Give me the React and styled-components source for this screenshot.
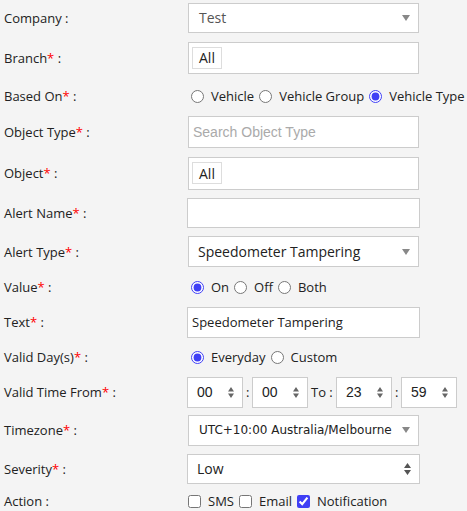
import { createGlobalStyle, styled } from "styled-components";

const Global = createGlobalStyle`
  html, body {
    margin: 0;
    padding: 0;
    background: #f4f4f4;
  }
  body {
    font-family: "Open Sans", "Liberation Sans", sans-serif;
    font-size: 13px;
    color: #222;
  }
`;

const Form = styled.div`
  width: 467px;
  display: flex;
  flex-direction: column;
`;

const Row = styled.div`
  height: ${(p) => p.$h}px;
  display: flex;
  align-items: center;
`;

const Label = styled.div`
  width: 187px;
  padding-left: 4px;
  box-sizing: border-box;
  flex-shrink: 0;
  white-space: nowrap;
`;

const Req = styled.span`
  color: #f00;
`;

const Field = styled.div`
  display: flex;
  align-items: center;
  flex-shrink: 0;
  white-space: nowrap;
  padding-left: ${(p) => p.$ml || 0}px;
`;

const Box = styled.div`
  box-sizing: border-box;
  flex-shrink: 0;
  width: ${(p) => p.$w}px;
  height: ${(p) => p.$h}px;
  background: #fff;
  border: 1px solid #ccc;
  display: flex;
  align-items: center;
  padding-left: ${(p) => p.$pl}px;
  padding-right: 8px;
  font-size: ${(p) => p.$fs || 14}px;
  color: ${(p) => p.$c || "#222"};
  font-family: ${(p) => p.$f || "inherit"};
  white-space: nowrap;
  overflow: hidden;
`;

const Grow = styled.span`
  flex: 1;
`;

const Tag = styled.span`
  box-sizing: border-box;
  height: 22px;
  padding: 0 6px;
  border: 1px solid #ddd;
  display: inline-flex;
  align-items: center;
  font-size: 14px;
`;

const Options = styled.div`
  display: flex;
  align-items: center;
`;

const Opt = styled.label`
  display: inline-flex;
  align-items: center;
  margin-right: 5px;
  white-space: nowrap;
  input {
    margin: 0 7px 0 0;
    width: 13px;
    height: 13px;
    accent-color: #3f3ff5;
  }
`;

const TimeSep = styled.span`
  box-sizing: border-box;
  width: ${(p) => p.$w}px;
  padding-left: ${(p) => p.$pl}px;
  font-size: 13px;
  white-space: nowrap;
`;

const Caret = () => (
  <svg width="8" height="6" viewBox="0 0 8 6">
    <path d="M0 0 L8 0 L4 6 Z" fill="#888" />
  </svg>
);

const Spin = () => (
  <svg width="7" height="12" viewBox="0 0 7 12">
    <path d="M0 5 L7 5 L3.5 0 Z M0 7 L7 7 L3.5 12 Z" fill="#555" />
  </svg>
);

const SpinSmall = () => (
  <svg width="6" height="11" viewBox="0 0 6 11">
    <path d="M0 4.5 L6 4.5 L3 0 Z M0 6.5 L6 6.5 L3 11 Z" fill="#666" />
  </svg>
);

const L = ({ t, req }) => (
  <Label>
    {t}
    {req && <Req>*</Req>} :
  </Label>
);

const Radio = ({ name, text, checked }) => (
  <Opt>
    <input type="radio" name={name} defaultChecked={checked} />
    {text}
  </Opt>
);

const Check = ({ text, checked }) => (
  <Opt>
    <input type="checkbox" defaultChecked={checked} />
    {text}
  </Opt>
);

const Time = ({ v }) => (
  <Box $w={56} $h={31} $pl={9} $fs={14} $f='"Liberation Sans", Arial, sans-serif'>
    <Grow>{v}</Grow>
    <SpinSmall />
  </Box>
);

export default function App() {
  return (
    <Form>
      <Global />
      <Row $h={35}>
        <L t="Company" />
        <Field $ml={1}>
          <Box $w={231} $h={30} $pl={10} $c="#555">
            <Grow>Test</Grow>
            <Caret />
          </Box>
        </Field>
      </Row>
      <Row $h={45}>
        <L t="Branch" req />
        <Field $ml={1}>
          <Box $w={231} $h={32} $pl={3}>
            <Tag>All</Tag>
          </Box>
        </Field>
      </Row>
      <Row $h={32}>
        <L t="Based On" req />
        <Field $ml={4}>
          <Options>
            <Radio name="based" text="Vehicle" />
            <Radio name="based" text="Vehicle Group" />
            <Radio name="based" text="Vehicle Type" checked />
          </Options>
        </Field>
      </Row>
      <Row $h={39}>
        <L t="Object Type" req />
        <Field $ml={1}>
          <Box $w={231} $h={32} $pl={4} $c="#aaa" $f='"Liberation Sans", Arial, sans-serif'>
            Search Object Type
          </Box>
        </Field>
      </Row>
      <Row $h={44}>
        <L t="Object" req />
        <Field $ml={1}>
          <Box $w={231} $h={33} $pl={3}>
            <Tag>All</Tag>
          </Box>
        </Field>
      </Row>
      <Row $h={35}>
        <L t="Alert Name" req />
        <Field>
          <Box $w={233} $h={30} $pl={4} />
        </Field>
      </Row>
      <Row $h={43}>
        <L t="Alert Type" req />
        <Field $ml={1}>
          <Box $w={231} $h={31} $pl={9}>
            <Grow>Speedometer Tampering</Grow>
            <Caret />
          </Box>
        </Field>
      </Row>
      <Row $h={28}>
        <L t="Value" req />
        <Field $ml={4}>
          <Options>
            <Radio name="value" text="On" checked />
            <Radio name="value" text="Off" />
            <Radio name="value" text="Both" />
          </Options>
        </Field>
      </Row>
      <Row $h={42}>
        <L t="Text" req />
        <Field>
          <Box $w={233} $h={31} $pl={4} $fs={13}>
            Speedometer Tampering
          </Box>
        </Field>
      </Row>
      <Row $h={28}>
        <L t="Valid Day(s)" req />
        <Field $ml={4}>
          <Options>
            <Radio name="day" text="Everyday" checked />
            <Radio name="day" text="Custom" />
          </Options>
        </Field>
      </Row>
      <Row $h={42}>
        <L t="Valid Time From" req />
        <Field>
          <Time v="00" />
          <TimeSep $w={9} $pl={3}>:</TimeSep>
          <Time v="00" />
          <TimeSep $w={28} $pl={3}>To :</TimeSep>
          <Time v="23" />
          <TimeSep $w={9} $pl={3}>:</TimeSep>
          <Time v="59" />
        </Field>
      </Row>
      <Row $h={34}>
        <L t="Timezone" req />
        <Field $ml={1}>
          <Box $w={231} $h={31} $pl={10} $fs={12} $f='"DejaVu Sans", Verdana, sans-serif'>
            <Grow>UTC+10:00 Australia/Melbourne</Grow>
            <Caret />
          </Box>
        </Field>
      </Row>
      <Row $h={43}>
        <L t="Severity" req />
        <Field>
          <Box $w={233} $h={30} $pl={9}>
            <Grow>Low</Grow>
            <Spin />
          </Box>
        </Field>
      </Row>
      <Row $h={22}>
        <L t="Action" />
        <Field $ml={1}>
          <Options>
            <Check text="SMS" />
            <Check text="Email" />
            <Check text="Notification" checked />
          </Options>
        </Field>
      </Row>
    </Form>
  );
}
